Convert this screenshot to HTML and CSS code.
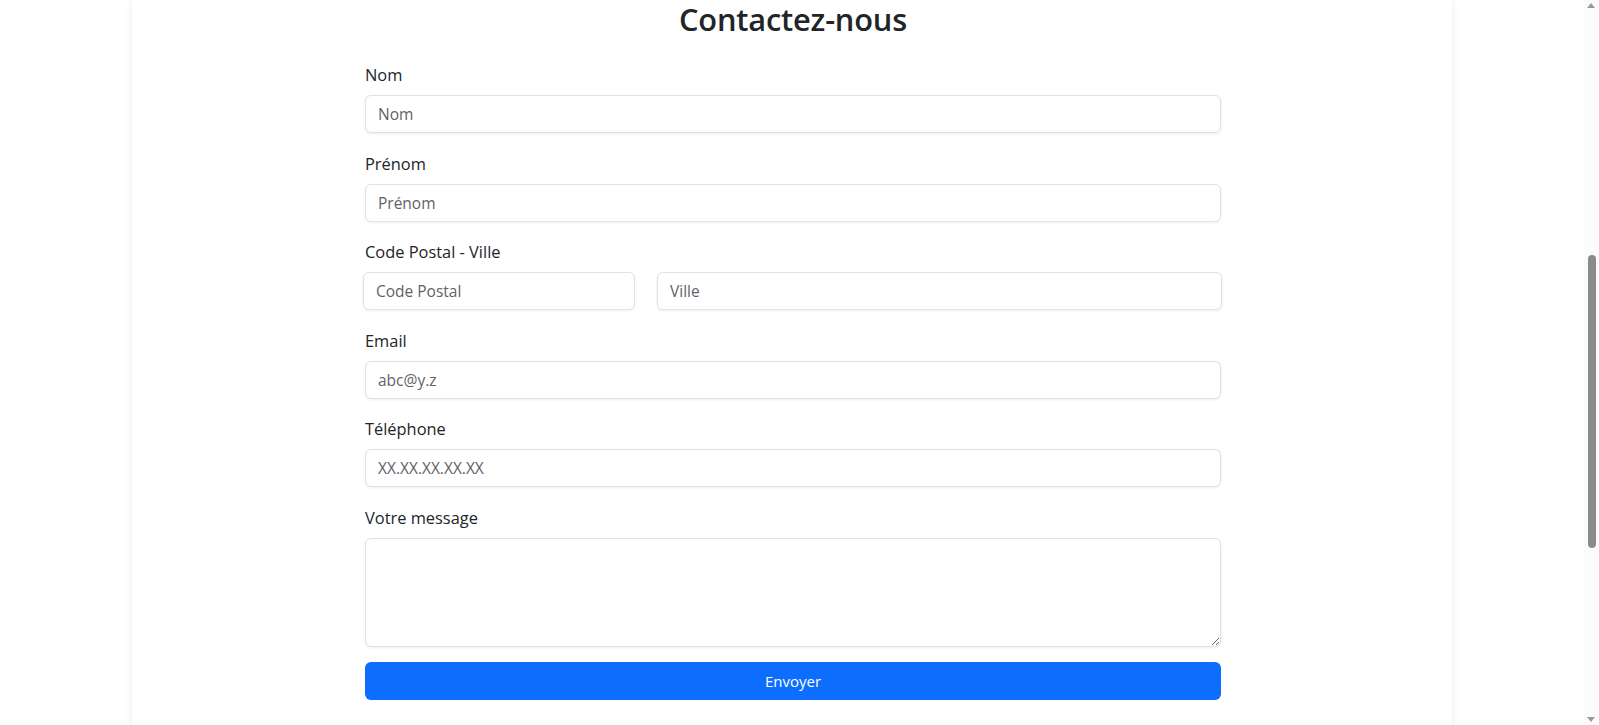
FILE: index.html
```html
<!DOCTYPE html>
<html lang="fr">
<head>
<meta charset="utf-8">
<title>Contactez-nous</title>
<link rel="stylesheet" href="styles.css">
</head>
<body>
<div class="page">
  <main class="card">
    <h2 class="title">Contactez-nous</h2>
    <form class="form">
      <div class="group">
        <label class="label" for="nom">Nom</label>
        <input class="field" id="nom" type="text" placeholder="Nom">
      </div>
      <div class="group">
        <label class="label" for="prenom">Prénom</label>
        <input class="field" id="prenom" type="text" placeholder="Prénom">
      </div>
      <div class="group">
        <label class="label" for="cp">Code Postal - Ville</label>
        <div class="pair">
          <input class="field" id="cp" type="text" placeholder="Code Postal">
          <input class="field" id="ville" type="text" placeholder="Ville">
        </div>
      </div>
      <div class="group">
        <label class="label" for="email">Email</label>
        <input class="field" id="email" type="email" placeholder="abc@y.z">
      </div>
      <div class="group">
        <label class="label" for="tel">Téléphone</label>
        <input class="field" id="tel" type="tel" placeholder="XX.XX.XX.XX.XX">
      </div>
      <div class="group group-last">
        <label class="label" for="msg">Votre message</label>
        <textarea class="field area" id="msg" rows="4"></textarea>
      </div>
      <button class="submit" type="button">Envoyer</button>
    </form>
  </main>
</div>
<div class="scrollbar" aria-hidden="true">
  <span class="arrow arrow-up"></span>
  <span class="thumb"></span>
  <span class="arrow arrow-down"></span>
</div>
</body>
</html>
```
FILE: styles.css
```css
* { box-sizing: border-box; }
html, body { margin: 0; height: 100%; overflow: hidden; }
body {
  background: #fff;
  font-family: "Open Sans", "Liberation Sans", sans-serif;
  color: #212529;
  font-size: 16px;
}
.page {
  margin-right: 15px;
  display: flex;
  justify-content: center;
}
.card {
  width: 1320px;
  min-height: 740px;
  padding-left: 2px;
  background: #fff;
  box-shadow: 0 0 8px rgba(0, 0, 0, 0.08);
  display: flex;
  flex-direction: column;
  align-items: center;
}
.title {
  margin: 0 0 25px;
  font-size: 30.8px;
  font-weight: 600;
  line-height: 38px;
  letter-spacing: -0.2px;
  text-align: center;
  color: #212529;
}
.form {
  width: 856px;
  display: flex;
  flex-direction: column;
}
.group { margin-bottom: 18.5px; display: flex; flex-direction: column; }
.group-last { margin-bottom: 15px; }
.label {
  line-height: 24px;
  margin-bottom: 8px;
  font-size: 16.4px;
}
.field {
  display: block;
  width: 100%;
  height: 38px;
  padding: 6px 12px;
  font-family: inherit;
  font-size: 15.5px;
  line-height: 24px;
  color: #212529;
  background: #fff;
  border: 1px solid #e0e1e4;
  border-radius: 6px;
  box-shadow: 0 1px 3px rgba(0, 0, 0, 0.07);
  outline: none;
}
.field::placeholder { color: #5f6368; }
.area { height: 109px; resize: vertical; }
.pair {
  display: grid;
  grid-template-columns: 272px 1fr;
  gap: 22px;
  margin: 0 -1px 0 -2px;
}
.submit {
  height: 38px;
  border: 0;
  border-radius: 6px;
  background: #0d6efd;
  color: #fff;
  font-family: inherit;
  font-size: 15px;
}
.scrollbar {
  position: fixed;
  top: 0;
  right: 0;
  width: 15px;
  height: 100%;
  background: #fbfbfb;
}
.thumb {
  position: absolute;
  left: 4px;
  top: 255px;
  width: 8px;
  height: 293px;
  border-radius: 4px;
  background: #8b8b8b;
}
.arrow {
  position: absolute;
  left: 3px;
  width: 0;
  height: 0;
  border-left: 4.5px solid transparent;
  border-right: 4.5px solid transparent;
}
.arrow-up { top: 3px; border-bottom: 5px solid #9a9a9a; }
.arrow-down { bottom: 3px; border-top: 5px solid #9a9a9a; }
```
